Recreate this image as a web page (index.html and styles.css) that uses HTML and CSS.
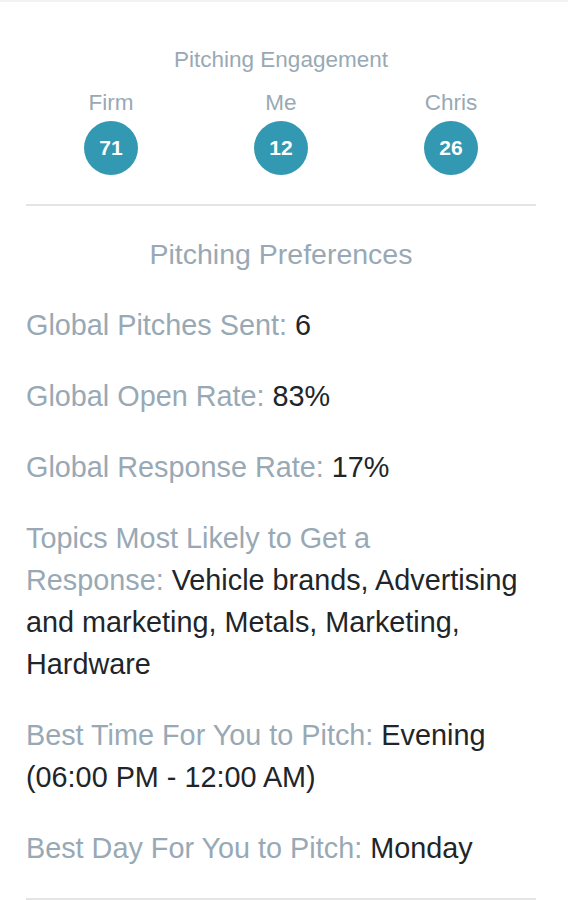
FILE: index.html
```html
<!DOCTYPE html>
<html>
<head>
<meta charset="utf-8">
<link rel="stylesheet" href="styles.css">
</head>
<body>
<div class="topbar"></div>
<div class="panel">
  <section class="engagement">
    <div class="eng-title">Pitching Engagement</div>
    <div class="eng-grid">
      <div class="eng-item"><div class="eng-label">Firm</div><div class="eng-badge">71</div></div>
      <div class="eng-item"><div class="eng-label">Me</div><div class="eng-badge">12</div></div>
      <div class="eng-item"><div class="eng-label">Chris</div><div class="eng-badge">26</div></div>
    </div>
  </section>
  <hr class="divider">
  <section class="prefs">
    <h2 class="prefs-title">Pitching Preferences</h2>
    <p class="pref"><span class="key">Global Pitches Sent:</span>&nbsp;<span class="val">6</span></p>
    <p class="pref"><span class="key">Global Open Rate:</span>&nbsp;<span class="val">83%</span></p>
    <p class="pref"><span class="key">Global Response Rate:</span>&nbsp;<span class="val">17%</span></p>
    <p class="pref"><span class="key">Topics Most Likely to Get a Response:</span>&nbsp;<span class="val">Vehicle brands, Advertising and marketing, Metals, Marketing, Hardware</span></p>
    <p class="pref"><span class="key">Best Time For You to Pitch:</span>&nbsp;<span class="val">Evening (06:00 PM - 12:00 AM)</span></p>
    <p class="pref"><span class="key">Best Day For You to Pitch:</span>&nbsp;<span class="val">Monday</span></p>
  </section>
  <hr class="divider">
</div>
</body>
</html>
```
FILE: styles.css
```css
html, body {
  margin: 0;
  padding: 0;
  background: #ffffff;
}
body {
  font-family: "Liberation Sans", Arial, sans-serif;
  color: #212529;
}
.topbar {
  height: 2px;
  background: #f3f3f3;
}
.panel {
  padding: 0 32px 0 26px;
}
.engagement {
  padding-top: 41px;
}
.eng-title {
  text-align: center;
  font-size: 22.5px;
  line-height: 34px;
  color: #98a9b5;
  margin-bottom: 8.5px;
}
.eng-grid {
  display: grid;
  grid-template-columns: repeat(3, 1fr);
}
.eng-item {
  display: flex;
  flex-direction: column;
  align-items: center;
  gap: 1.5px;
}
.eng-label {
  font-size: 22.5px;
  line-height: 34px;
  color: #98a9b5;
}
.eng-badge {
  width: 54px;
  height: 54px;
  border-radius: 50%;
  background: #3398b1;
  color: #ffffff;
  font-weight: bold;
  font-size: 21px;
  display: flex;
  align-items: center;
  justify-content: center;
}
.divider {
  border: 0;
  height: 2px;
  background: #e4e4e4;
  margin: 29px 0 0 0;
}
.prefs {
  padding-top: 27px;
}
.prefs-title {
  margin: 0 0 29px 0;
  text-align: center;
  font-weight: normal;
  font-size: 28.5px;
  line-height: 42px;
  color: #98a9b5;
}
.pref {
  margin: 0 0 29px 0;
  font-size: 28.8px;
  line-height: 42px;
}
.pref:last-child {
  margin-bottom: 0;
}
.key {
  color: #98a9b5;
}
.val {
  color: #212529;
}
```
